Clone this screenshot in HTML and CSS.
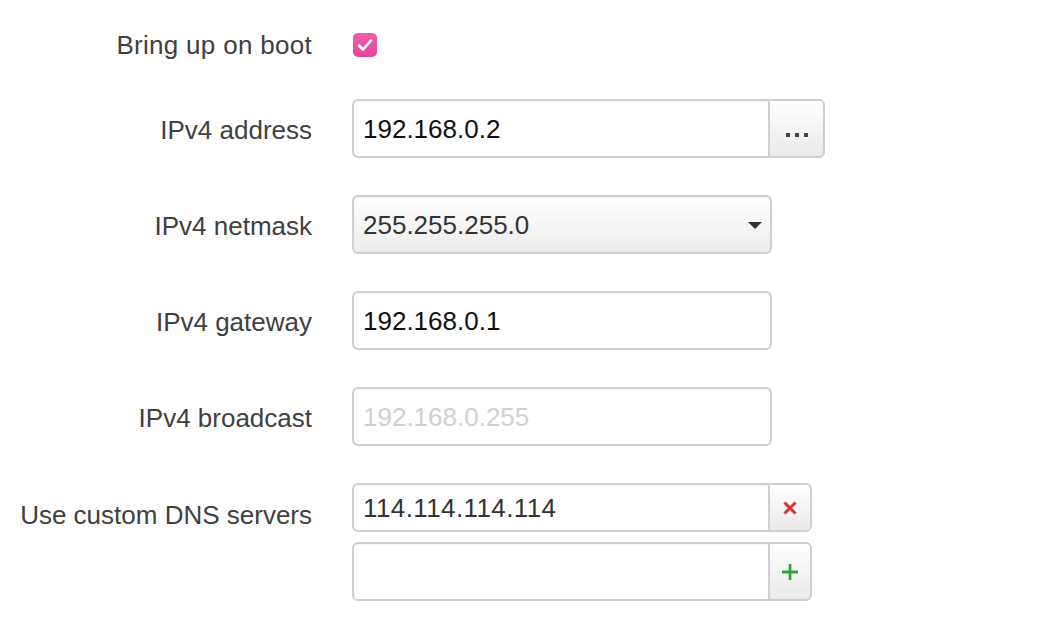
FILE: index.html
```html
<!DOCTYPE html>
<html>
<head>
<meta charset="utf-8">
<link rel="stylesheet" href="styles.css">
</head>
<body>
<div class="form">
  <div class="row row-check">
    <label class="lbl">Bring up on boot</label>
    <div class="ctl">
      <span class="checkbox">
        <svg width="16" height="14" viewBox="0 0 16 14"><path d="M2 7.5 L6 11.5 L14 2.5" fill="none" stroke="#fff" stroke-width="2.6" stroke-linecap="round" stroke-linejoin="round"/></svg>
      </span>
    </div>
  </div>
  <div class="row">
    <label class="lbl">IPv4 address</label>
    <div class="ctl group">
      <div class="input joined w418"><span class="val black">192.168.0.2</span></div>
      <div class="btn btn-wide"><span class="dots"><i></i><i></i><i></i></span></div>
    </div>
  </div>
  <div class="row">
    <label class="lbl">IPv4 netmask</label>
    <div class="ctl">
      <div class="select w420"><span class="val">255.255.255.0</span><span class="caret"></span></div>
    </div>
  </div>
  <div class="row">
    <label class="lbl">IPv4 gateway</label>
    <div class="ctl">
      <div class="input w420"><span class="val black">192.168.0.1</span></div>
    </div>
  </div>
  <div class="row">
    <label class="lbl">IPv4 broadcast</label>
    <div class="ctl">
      <div class="input w420"><span class="val ph">192.168.0.255</span></div>
    </div>
  </div>
  <div class="row row-dns">
    <label class="lbl">Use custom DNS servers</label>
    <div class="ctl stack">
      <div class="group short">
        <div class="input joined w418"><span class="val wide">114.114.114.114</span></div>
        <div class="btn btn-narrow">
          <svg width="14" height="14" viewBox="0 0 14 14"><path d="M2.5 2.5 L11.5 11.5 M11.5 2.5 L2.5 11.5" stroke="#d9362f" stroke-width="3" stroke-linecap="square"/></svg>
        </div>
      </div>
      <div class="group">
        <div class="input joined w418"></div>
        <div class="btn btn-narrow">
          <svg width="18" height="18" viewBox="0 0 18 18"><path d="M9 1 V17 M1 9 H17" stroke="#3aa13a" stroke-width="2.8"/></svg>
        </div>
      </div>
    </div>
  </div>
</div>
</body>
</html>
```

FILE: styles.css
```css
html, body {
  margin: 0;
  padding: 0;
  background: #fff;
}
body {
  font-family: "Liberation Sans", Arial, Helvetica, sans-serif;
  font-size: 26px;
  color: #404040;
}
.form {
  padding-top: 16px;
}
.row {
  display: flex;
  align-items: center;
  margin-bottom: 37px;
}
.row-check {
  height: 59px;
  margin-bottom: 24px;
}
.row-dns {
  align-items: flex-start;
}
.lbl {
  width: 312px;
  flex: none;
  text-align: right;
  margin-right: 40px;
  line-height: 59px;
  padding-top: 2px;
  box-sizing: border-box;
  height: 59px;
}
.row-check .lbl {
  padding-top: 0;
  letter-spacing: 0.3px;
}
.row-dns .lbl {
  height: 49px;
  line-height: 49px;
  padding-top: 8px;
}
.ctl {
  display: flex;
}
.stack {
  flex-direction: column;
  gap: 10px;
}
.group {
  display: flex;
  height: 59px;
}
.group.short {
  height: 49px;
}
.checkbox {
  width: 24px;
  height: 24px;
  margin-left: 1px;
  margin-top: -2px;
  border-radius: 5px;
  background: linear-gradient(#ef5fae, #e6449a);
  display: flex;
  align-items: center;
  justify-content: center;
}
.input, .select {
  box-sizing: border-box;
  height: 59px;
  border: 2px solid #cfcfcf;
  border-radius: 6px;
  background: #fff;
  display: flex;
  align-items: center;
  padding-left: 9px;
  box-shadow: inset 0 1px 2px rgba(0,0,0,0.05);
}
.group .input { height: 100%; }
.w420 { width: 420px; }
.w418 { width: 418px; }
.joined {
  border-top-right-radius: 0;
  border-bottom-right-radius: 0;
}
.val {
  color: #333;
  line-height: 1;
}
.val.wide { letter-spacing: 0.4px; }
.val.black { color: #111; }
.val.ph { color: #d0d0d0; }
.select {
  background: linear-gradient(#ffffff, #ececec);
  justify-content: space-between;
  padding-right: 8px;
}
.caret {
  width: 0;
  height: 0;
  border-left: 7px solid transparent;
  border-right: 7px solid transparent;
  border-top: 7px solid #333;
  margin-top: 2px;
}
.btn {
  box-sizing: border-box;
  height: 100%;
  border: 2px solid #cfcfcf;
  border-radius: 0 6px 6px 0;
  background: linear-gradient(#ffffff, #e9e9e9);
  display: flex;
  align-items: center;
  justify-content: center;
  margin-left: -2px;
}
.btn-wide { width: 57px; }
.btn-narrow { width: 44px; }
.dots {
  display: flex;
  gap: 5px;
  margin-top: 12px;
}
.dots i {
  display: block;
  width: 4px;
  height: 4px;
  background: #444;
}
```
